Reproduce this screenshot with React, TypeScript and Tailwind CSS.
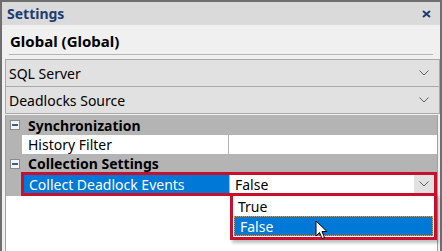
import React from "react";

const Chevron = () => (
  <svg width="10" height="6" viewBox="0 0 10 6" className="text-[#606060]">
    <path d="M0.5 0.5 L5 5 L9.5 0.5" fill="none" stroke="currentColor" strokeWidth="1" />
  </svg>
);

const Minus = () => (
  <span className="w-[10px] h-[10px] border border-[#8a8a8a] bg-[#f4f4f4] flex items-center justify-center">
    <span className="w-[6px] h-[2px] bg-[#3b5a9a]" />
  </span>
);

const Dropdown = ({ label }: { label: string }) => (
  <div className="ml-[3px] h-[28px] -mb-px border border-[#a9a9a9] bg-[#e1e1e1] flex items-center justify-between pl-[3px] pr-[10px]">
    <span>{label}</span>
    <Chevron />
  </div>
);

export default function App() {
  return (
    <div
      className="w-[442px] h-[251px] overflow-hidden bg-[#6e6e6e] pl-[2px] pt-[2px] pr-[2px] text-[14px] text-black"
      style={{ fontFamily: '"Noto Sans", "Open Sans", sans-serif' }}
    >
      <div className="h-full bg-[#f0f0f0] flex flex-col relative">
        {/* title bar */}
        <div className="h-[23px] bg-[#dadada] flex items-center justify-between pl-[5px] pr-[9px]">
          <span className="font-bold text-[#1d3d70] leading-none">Settings</span>
          <svg width="9" height="8" viewBox="0 0 9 8">
            <path d="M1 1 L8 7 M8 1 L1 7" stroke="#1d3d70" strokeWidth="2" />
          </svg>
        </div>

        {/* heading */}
        <div className="mx-[7px] h-[30px] border-b border-[#b4b4b4] flex items-center pl-px pt-[4px]">
          <span className="font-bold text-[15px]">Global (Global)</span>
        </div>

        <div className="mt-[4px]">
          <Dropdown label="SQL Server" />
          <Dropdown label="Deadlocks Source" />
        </div>

        {/* property grid */}
        <div className="ml-[3px] mr-[2px] mt-[2px] flex-1 bg-white border-l border-r border-[#a0a0a0] flex flex-col">
          <div className="h-[20px] bg-[#b4b4b4] flex items-center gap-[8px] pl-[4px] font-bold">
            <Minus />
            <span>Synchronization</span>
          </div>
          <div className="h-[19px] flex">
            <div className="w-[16px] bg-[#b4b4b4]" />
            <div className="w-[207px] border-r border-[#b4b4b4] pl-[6px] flex items-center">History Filter</div>
            <div className="flex-1" />
          </div>
          <div className="h-[19px] bg-[#b4b4b4] flex items-center gap-[8px] pl-[4px] font-bold">
            <Minus />
            <span>Collection Settings</span>
          </div>
          <div className="h-[24px] -mt-px flex bg-[#b4b4b4]">
            <div className="w-[15px]" />
            <div className="flex-1 flex border-[3px] border-[#c8102e] bg-white">
              <div className="w-[205px] bg-[#0078d7] text-white pl-[5px] flex items-center">Collect Deadlock Events</div>
              <div className="flex-1 flex items-center justify-between pl-[5px] border-l border-[#b4b4b4]">
                <span>False</span>
                <div className="w-[20px] h-full bg-[#e1e1e1] flex items-center justify-center">
                  <Chevron />
                </div>
              </div>
            </div>
          </div>
          <div className="flex">
            <div className="w-[224px]" />
            <div className="flex-1 -mt-[3px] border-[3px] border-[#c8102e] bg-white shadow-[2px_3px_3px_rgba(0,0,0,0.25)] flex flex-col">
              <div className="h-[20px] pl-[5px] flex items-center">True</div>
              <div className="h-[20px] pl-[5px] mx-px mb-px flex items-center bg-[#0078d7] text-white border border-dotted border-[#e0a040]">
                False
              </div>
            </div>
          </div>
        </div>

        {/* mouse cursor */}
        <svg className="absolute left-[313px] top-[218px]" width="13" height="20" viewBox="0 0 13 20">
          <path
            d="M1 1 L1 16 L4.5 12.5 L7 18.5 L9.5 17.5 L7 11.5 L12 11.5 Z"
            fill="white"
            stroke="black"
            strokeWidth="1"
            strokeLinejoin="round"
          />
        </svg>
      </div>
    </div>
  );
}
